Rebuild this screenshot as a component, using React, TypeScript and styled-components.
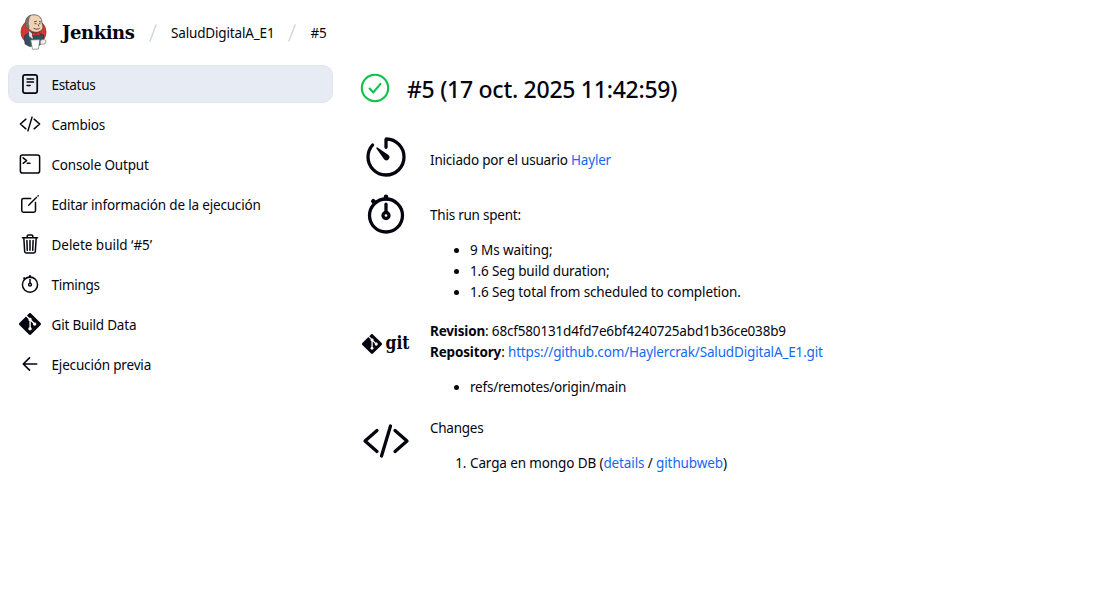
import React from "react";
import styled, { createGlobalStyle } from "styled-components";
import { SiGit } from "react-icons/si";

const Global = createGlobalStyle`
  body {
    margin: 0;
    background: #fff;
    color: #05050f;
    font-family: "Noto Sans", "Open Sans", sans-serif;
    font-size: 13.5px;
    line-height: 21px;
  }
`;

const Page = styled.div`
  min-height: 596px;
  overflow: hidden;
`;

const Header = styled.header`
  display: flex;
  align-items: center;
  height: 65px;
  padding-left: 20px;
`;

const Logo = styled.svg`
  width: 27px;
  height: 36px;
  margin: 0 15px 1px 0;
`;

const Brand = styled.span`
  width: 73px;
  font-family: "DejaVu Serif", Georgia, serif;
  font-weight: 700;
  font-size: 18px;
  letter-spacing: -0.45px;
`;

const Slash = styled.svg`
  width: 8px;
  height: 18px;
  margin: 0 14px;
  stroke: #d0d9e4;
  stroke-width: 1.6;
  stroke-linecap: round;
`;

const Fit = styled.span<{ $ls?: number }>`
  letter-spacing: ${(p) => p.$ls ?? 0}px;
  white-space: nowrap;
`;

const Crumb = styled(Fit)`
  padding-top: 2px;
`;

const Columns = styled.div`
  display: flex;
`;

const Sidebar = styled.nav`
  display: flex;
  flex-direction: column;
  gap: 2px;
  width: 325px;
  margin-left: 8px;
`;

const Task = styled.a<{ $active?: boolean }>`
  display: flex;
  align-items: center;
  gap: 10.5px;
  box-sizing: border-box;
  height: 38px;
  padding: 2px 10px 0;
  border: 1px solid ${(p) => (p.$active ? "#e1e6ee" : "transparent")};
  border-radius: 10px;
  background: ${(p) => (p.$active ? "#e7ebf3" : "transparent")};
`;

const Icon = styled.svg<{ $size: number }>`
  flex: none;
  width: ${(p) => p.$size}px;
  height: ${(p) => p.$size}px;
  margin-bottom: ${(p) => (p.$size < 30 ? 3 : 0)}px;
  fill: none;
  stroke: currentColor;
  stroke-width: 35;
  stroke-linecap: round;
  stroke-linejoin: round;
`;

const GitMark = styled(SiGit)`
  flex: none;
  margin-bottom: 3px;
`;

const Main = styled.main`
  margin-left: 27px;
`;

const Title = styled.h1`
  display: flex;
  align-items: center;
  gap: 17px;
  height: 30px;
  margin: 8px 0 30px;
  font-size: 23px;
  font-weight: 500;
  line-height: 30px;
`;

const TitleText = styled(Fit)`
  padding-top: 2px;
`;

const Status = styled.svg`
  width: 30px;
  height: 30px;
  fill: none;
  stroke: #0bc24c;
  stroke-width: 2.1;
  stroke-linecap: round;
  stroke-linejoin: round;
`;

const Row = styled.section<{ $h: number }>`
  display: grid;
  grid-template-columns: 48px auto;
  column-gap: 20px;
  align-items: start;
  height: ${(p) => p.$h}px;
  margin-left: 2px;
`;

const Detail = styled.div<{ $top: number }>`
  padding-top: ${(p) => p.$top}px;

  ul,
  ol {
    margin: 14px 0;
    padding-left: 40px;
  }
`;

const Link = styled.a`
  color: #1468f5;
`;

const GitLogo = styled.svg`
  width: 50px;
  height: 32px;
  margin-top: 8px;
  fill: currentColor;
`;

const Document = () => (
  <>
    <rect x="92" y="46" width="332" height="420" rx="50" strokeWidth="40" />
    <path d="M188 138h150M188 212h150M188 290h70" />
  </>
);
const Code = () => <path d="M160 368L32 256l128-112M352 368l128-112-128-112M304 96l-96 320" />;
const Terminal = () => (
  <>
    <rect x="32" y="48" width="448" height="416" rx="48" />
    <path d="M96 112l80 64-80 64M192 240h64" />
  </>
);
const Edit = () => (
  <>
    <path d="M384 224v184a40 40 0 01-40 40H104a40 40 0 01-40-40V168a40 40 0 0140-40h167.48" />
    <path
      fill="currentColor"
      stroke="none"
      d="M459.94 53.25a16.06 16.06 0 00-23.22-.56L424.35 65a8 8 0 000 11.31l11.34 11.32a8 8 0 0011.34 0l12.06-12c6.1-6.09 6.67-16.01.85-22.38zM399.34 90L218.82 270.2a9 9 0 00-2.31 3.93L208.16 299a3.91 3.91 0 004.86 4.86l24.85-8.35a9 9 0 003.93-2.31L422 112.66a9 9 0 000-12.66l-9.95-10a9 9 0 00-12.71 0z"
    />
  </>
);
const Trash = () => (
  <path d="M112 112l20 320c.95 18.49 14.4 32 32 32h184c17.67 0 30.87-13.51 32-32l20-320M80 112h352M192 112V72a23.93 23.93 0 0124-24h80a23.93 23.93 0 0124 24v40M256 176v224M184 176l8 224M328 176l-8 224" />
);
const Stopwatch = () => (
  <>
    <path d="M256 232v-80" />
    <path d="M256 88V72M132 132l-12-12" strokeWidth="48" />
    <circle cx="256" cy="272" r="32" />
    <circle cx="256" cy="272" r="176" />
  </>
);
const Timer = () => (
  <>
    <path d="M112.91 128A191.85 191.85 0 0064 254c-1.18 106.35 85.65 193.8 192 194 106.2.2 192-85.83 192-192 0-104.54-83.55-189.61-187.5-192a4.36 4.36 0 00-4.5 4.37V152" />
    <path
      fill="currentColor"
      stroke="none"
      d="M233.38 278.63l-79-113a8.13 8.13 0 0111.32-11.32l113 79a32.5 32.5 0 01-37.25 53.26 33.21 33.21 0 01-8.07-7.94z"
    />
  </>
);
const Back = () => <path d="M244 400L100 256l144-144M108 256h304" strokeWidth="38" />;

const tasks = [
  { label: "Estatus", icon: Document, active: true, ls: -0.33 },
  { label: "Cambios", icon: Code, ls: -0.25 },
  { label: "Console Output", icon: Terminal, ls: -0.17 },
  { label: "Editar información de la ejecución", icon: Edit, ls: -0.18 },
  { label: "Delete build ‘#5’", icon: Trash, ls: -0.03 },
  { label: "Timings", icon: Stopwatch, ls: -0.28 },
  { label: "Git Build Data", icon: null, ls: -0.19 },
  { label: "Ejecución previa", icon: Back, ls: -0.17 },
];

const Glyph = ({ of: Shape, size = 22 }: { of: React.ComponentType; size?: number }) => (
  <Icon viewBox="0 0 512 512" $size={size}>
    <Shape />
  </Icon>
);

const Butler = () => (
  <Logo viewBox="0 0 27 36">
    <circle cx="13.5" cy="18" r="12.600" fill="#d33833" stroke="#8d2a2a" strokeWidth="0.6" />
    <path d="M4.500 22l4.500-4 9 1 5.500 2 .5 5.500-4 4.500-10.500 1.500L5 30z" fill="#335061" stroke="#1b2a35" strokeWidth="0.6" />
    <path d="M6 8C6.200 3 9.500 .8 14 .8c5 0 7.800 3.200 8 7.700l1 4.500c-.6 3.800-4 5.300-7 5.300C11 18.300 6.700 14 6 8z" fill="#efd3b4" stroke="#4d3d36" strokeWidth="0.7" />
    <path d="M5.600 12.500C4.500 7 6 3 10.500 1.200 8.500 4 9 7 8.300 9l.9 4.500-1.400 1.500z" fill="#77716c" stroke="#4b4744" strokeWidth="0.4" />
    <path d="M14 7.800l2.800-.6M19 7.500l2 .5M14.500 9.700h2M19 9.700h1.400M18 10.300l1 2M13.500 14.300c2 1.200 4.700 1 6.300 0" fill="none" stroke="#4d3d36" strokeWidth="0.9" />
    <path d="M8.500 16.500l4 3 .500 6-4-3z" fill="#dfe3e6" stroke="#1b2a35" strokeWidth="0.3" />
    <path d="M12.500 18l3.500 1.500 3.700-1.800.5 4.300-4-1-3.700 1.300z" fill="#d33833" stroke="#711c22" strokeWidth="0.5" />
    <path d="M10.700 26l9-.3-1.200 9.300-6 .3z" fill="#fff" stroke="#777" strokeWidth="0.7" />
    <path d="M20.300 27c1.700-2.200 4.700-1.700 6 0l-1.300 3-4.700.3z" fill="#f2eeea" stroke="#6e6e6e" strokeWidth="0.6" />
  </Logo>
);

export default function App() {
  return (
    <Page>
      <Global />
      <Header>
        <Butler />
        <Brand>Jenkins</Brand>
        <Slash viewBox="0 0 8 18">
          <path d="M7 1L1 17" />
        </Slash>
        <Crumb $ls={-0.16}>SaludDigitalA_E1</Crumb>
        <Slash viewBox="0 0 8 18">
          <path d="M7 1L1 17" />
        </Slash>
        <Crumb $ls={-0.3}>#5</Crumb>
      </Header>
      <Columns>
        <Sidebar>
          {tasks.map((t) => (
            <Task key={t.label} $active={t.active}>
              {t.icon ? <Glyph of={t.icon} /> : <GitMark size={22} />}
              <Fit $ls={t.ls}>{t.label}</Fit>
            </Task>
          ))}
        </Sidebar>
        <Main>
          <Title>
            <Status viewBox="0 0 30 30">
              <circle cx="15" cy="15" r="13.200" />
              <path d="M9.600 15.600l3.800 3.800 7-8.600" />
            </Status>
            <TitleText $ls={-0.27}>#5 (17 oct. 2025 11:42:59)</TitleText>
          </Title>
          <Row $h={57}>
            <Glyph of={Timer} size={48} />
            <Detail $top={17}>
              <Fit $ls={-0.19}>
                Iniciado por el usuario <Link>Hayler</Link>
              </Fit>
            </Detail>
          </Row>
          <Row $h={130}>
            <Glyph of={Stopwatch} size={48} />
            <Detail $top={15}>
              <Fit $ls={-0.23}>This run spent:</Fit>
              <ul>
                <li><Fit $ls={-0.1}>9 Ms waiting;</Fit></li>
                <li><Fit $ls={-0.15}>1.6 Seg build duration;</Fit></li>
                <li><Fit $ls={-0.13}>1.6 Seg total from scheduled to completion.</Fit></li>
              </ul>
            </Detail>
          </Row>
          <Row $h={97}>
            <GitLogo viewBox="0 0 50 32">
              <SiGit x="0" y="6" size={20} />
              <text x="23.500" y="21" fontFamily="DejaVu Serif" fontWeight="700" fontSize="19" textLength="24" lengthAdjust="spacingAndGlyphs">
                git
              </text>
            </GitLogo>
            <Detail $top={1}>
              <Fit $ls={-0.17}><b>Revision</b>: 68cf580131d4fd7e6bf4240725abd1b36ce038b9</Fit>
              <br />
              <Fit $ls={-0.16}>
                <b>Repository</b>: <Link>https://github.com/Haylercrak/SaludDigitalA_E1.git</Link>
              </Fit>
              <ul>
                <li><Fit $ls={-0.21}>refs/remotes/origin/main</Fit></li>
              </ul>
            </Detail>
          </Row>
          <Row $h={60}>
            <Glyph of={Code} size={48} />
            <Detail $top={1}>
              <Fit $ls={-0.26}>Changes</Fit>
              <ol>
                <li>
                  <Fit $ls={-0.12}>
                    Carga en mongo DB (<Link>details</Link> / <Link>githubweb</Link>)
                  </Fit>
                </li>
              </ol>
            </Detail>
          </Row>
        </Main>
      </Columns>
    </Page>
  );
}
